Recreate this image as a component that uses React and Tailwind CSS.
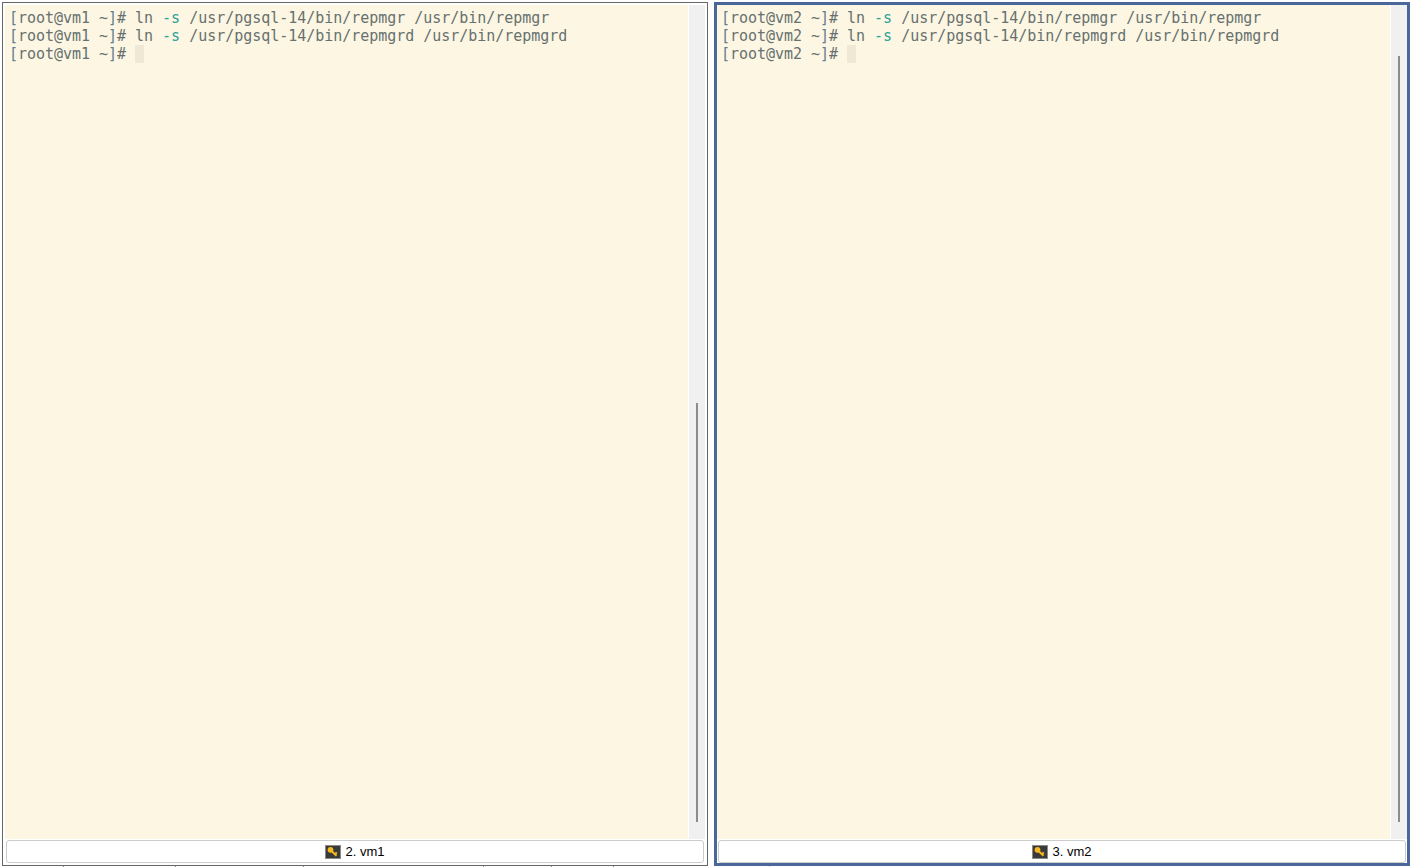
import React from "react";

function Line({ host, bin, last }) {
  return (
    <div className="h-[18px] whitespace-pre">
      <span className="text-[#5f7f8f]">[</span>
      <span>root@{host} ~</span>
      <span className="text-[#5f7f8f]">]</span>
      <span># </span>
      {last ? (
        <span className="inline-block w-[9px] h-[18px] bg-[#eee8d5] align-top" />
      ) : (
        <>
          <span>ln </span>
          <span className="text-[#2aa198]">-s</span>
          <span> /usr/pgsql-14/bin/{bin} /usr/bin/{bin}</span>
        </>
      )}
    </div>
  );
}

function KeyIcon() {
  return (
    <svg width="16" height="14" viewBox="0 0 16 14" className="shrink-0">
      <rect x="0" y="0" width="16" height="14" fill="#3a3a38" />
      <rect x="0.5" y="0.5" width="15" height="13" fill="none" stroke="#8a8a86" strokeWidth="1" />
      <circle cx="5.5" cy="4.8" r="2.9" fill="#f7b71e" />
      <path d="M6.5 6 L11.5 10.8 M10 9.2 L11.8 7.6" stroke="#f7b71e" strokeWidth="2" fill="none" />
    </svg>
  );
}

function Pane({ host, label, className, thumb }) {
  return (
    <div className={`flex flex-col h-full ${className}`}>
      <div className="flex-1 flex min-h-0">
        <div className="flex-1 bg-[#fdf6e3] text-[#66716f] text-[15px] tracking-[-0.03px] leading-[18px] font-['DejaVu_Sans_Mono',monospace] pl-[4px] pt-[4px] overflow-hidden">
          <Line host={host} bin="repmgr" />
          <Line host={host} bin="repmgrd" />
          <Line host={host} last />
        </div>
        <div className={`w-[16px] ml-px bg-[#f0f0f0] flex flex-col items-center ${thumb}`}>
          <div className="w-[2px] flex-1 bg-[#8c8c8c]" />
        </div>
      </div>
      <div className="h-[23px] mt-px mx-px border border-[#cccccc] rounded-[3px] bg-white flex items-center justify-center gap-[4px] text-[13px] text-black font-['Liberation_Sans',sans-serif]">
        <KeyIcon />
        <span>{label}</span>
      </div>
    </div>
  );
}

export default function App() {
  return (
    <div className="w-[1410px] h-[867px] bg-white flex flex-col pt-[2px] overflow-hidden">
      <div className="h-[864px] flex pl-[2px]">
        <Pane host="vm1" label="2. vm1" thumb="pt-[398px] pb-[17px]" className="w-[706px] border border-[#666666] p-[2px]" />
        <Pane host="vm2" label="3. vm2" thumb="pt-[51px] pb-[17px]" className="w-[696px] ml-[6px] border-[3px] border-[#4a6799]" />
      </div>
      <div className="h-px flex">
        <div className="w-px h-px bg-[#999999] ml-[63px]" />
        <div className="w-px h-px bg-[#999999] ml-[111px]" />
        <div className="w-px h-px bg-[#999999] ml-[127px]" />
        <div className="w-px h-px bg-[#999999] ml-[179px]" />
        <div className="w-px h-px bg-[#999999] ml-[67px]" />
        <div className="w-px h-px bg-[#999999] ml-[61px]" />
        <div className="w-px h-px bg-[#cccccc] ml-[155px]" />
      </div>
    </div>
  );
}
